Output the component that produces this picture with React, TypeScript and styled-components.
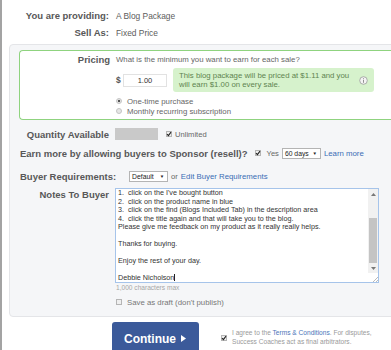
import styled, { createGlobalStyle } from "styled-components";

const GlobalStyle = createGlobalStyle`
    html, body {
        margin: 0;
        padding: 0;
        background: #ffffff;
        overflow: hidden;
    }
    body {
        font-family: "Liberation Sans", Arial, sans-serif;
    }
    #root {
        min-height: 350px;
    }
`;

const noteLines = [
    "1.  click on the I've bought button",
    "2.  click on the product name in blue",
    "3.  click on the find (Blogs Included Tab) in the description area",
    "4.  click the title again and that will take you to the blog.",
    "Please give me feedback on my product as it really really helps.",
    "",
    "Thanks for buying.",
    "",
    "Enjoy the rest of your day.",
    "",
    "Debbie Nicholson",
];

const CheckBox = ({ checked }: { checked?: boolean }) => (
    <Box>
        {checked && (
            <svg width="6" height="6" viewBox="0 0 6 6">
                <path d="M1 3.2 L2.4 4.6 L5 1.2" fill="none" stroke="#222" strokeWidth="1.1" />
            </svg>
        )}
    </Box>
);

const Radio = ({ checked }: { checked?: boolean }) => (
    <RadioDot $checked={checked} />
);

const App = () => {
    return (
        <Page>
            <GlobalStyle />
            <Summary>
                <InfoRow>
                    <Label>You are providing:</Label>
                    <Value>A Blog Package</Value>
                </InfoRow>
                <InfoRow>
                    <Label>Sell As:</Label>
                    <Value>Fixed Price</Value>
                </InfoRow>
            </Summary>

            <Panel>
                <PricingBox>
                    <PricingLabel>Pricing</PricingLabel>
                    <PricingBody>
                        <Question>What is the minimum you want to earn for each sale?</Question>
                        <PriceLine>
                            <Dollar>$</Dollar>
                            <PriceInput>1.00</PriceInput>
                            <Notice>
                                <span>
                                    This blog package will be priced at $1.11 and you
                                    <br />
                                    will earn $1.00 on every sale.
                                </span>
                                <svg width="9" height="9" viewBox="0 0 9 9">
                                    <circle cx="4.5" cy="4.5" r="3.8" fill="#f4f4f4" stroke="#9a9a9a" strokeWidth="0.8" />
                                    <rect x="4.05" y="3.8" width="0.9" height="3" fill="#888" />
                                    <rect x="4.05" y="2.2" width="0.9" height="0.9" fill="#888" />
                                </svg>
                            </Notice>
                        </PriceLine>
                        <RadioList>
                            <OptionRow>
                                <Radio checked />
                                One-time purchase
                            </OptionRow>
                            <OptionRow>
                                <Radio />
                                Monthly recurring subscription
                            </OptionRow>
                        </RadioList>
                    </PricingBody>
                </PricingBox>

                <FieldRow>
                    <Label>Quantity Available</Label>
                    <Inline>
                        <QtyBox />
                        <CheckBox checked />
                        <Small>Unlimited</Small>
                    </Inline>
                </FieldRow>

                <WideRow>
                    <Label>Earn more by allowing buyers to Sponsor (resell)?</Label>
                    <Inline $gap={6}>
                        <CheckBox checked />
                        <Small>Yes</Small>
                    </Inline>
                    <Select $width={39}>60 days</Select>
                    <Link>Learn more</Link>
                </WideRow>

                <WideRow $top={7}>
                    <Label>Buyer Requirements:</Label>
                    <Select $width={39} $left={6}>Default</Select>
                    <Small>or</Small>
                    <Link>Edit Buyer Requirements</Link>
                </WideRow>

                <NotesRow>
                    <NotesLabel>Notes To Buyer</NotesLabel>
                    <div>
                        <NoteArea>
                            <NoteText>
                                {noteLines.map((line, i) => (
                                    <NoteLine key={i}>
                                        {line}
                                        {i === noteLines.length - 1 && <Caret />}
                                    </NoteLine>
                                ))}
                            </NoteText>
                            <ScrollBar>
                                <ScrollArrow>
                                    <svg width="5" height="3" viewBox="0 0 5 3">
                                        <path d="M0 3 L2.5 0 L5 3 Z" fill="#777" />
                                    </svg>
                                </ScrollArrow>
                                <Track>
                                    <Thumb />
                                </Track>
                                <ScrollArrow>
                                    <svg width="5" height="3" viewBox="0 0 5 3">
                                        <path d="M0 0 L2.5 3 L5 0 Z" fill="#777" />
                                    </svg>
                                </ScrollArrow>
                                <Grip>
                                    <svg width="6" height="6" viewBox="0 0 6 6">
                                        <path d="M6 1 L1 6 M6 4 L4 6" stroke="#aaa" strokeWidth="0.8" />
                                    </svg>
                                </Grip>
                            </ScrollBar>
                        </NoteArea>
                        <Hint>1,000 characters max</Hint>
                        <DraftRow>
                            <CheckBox />
                            Save as draft (don't publish)
                        </DraftRow>
                    </div>
                </NotesRow>
            </Panel>

            <Footer>
                <ContinueButton>
                    Continue
                    <svg width="6" height="7" viewBox="0 0 6 7">
                        <path d="M0 0 L5 3.5 L0 7 Z" fill="#fff" />
                    </svg>
                </ContinueButton>
                <Agree>
                    <CheckBox checked />
                    <AgreeText>
                        I agree to the <FootLink>Terms &amp; Conditions</FootLink>. For disputes,
                        <br />
                        Success Coaches act as final arbitrators.
                    </AgreeText>
                </Agree>
            </Footer>
        </Page>
    );
};

const Page = styled.div`
    min-height: 350px;
    border-left: 2px solid #a3a3a3;
    color: #666;
`;

const Summary = styled.div`
    padding-top: 7px;
`;

const InfoRow = styled.div`
    display: grid;
    grid-template-columns: 107px 1fr;
    column-gap: 7px;
    height: 17px;
    align-items: center;
`;

const Label = styled.div`
    font-size: 9.5px;
    font-weight: bold;
    color: #585858;
    text-align: right;
    white-space: nowrap;
`;

const Value = styled.div`
    font-size: 8.4px;
    color: #5c5c5c;
`;

const Panel = styled.div`
    margin: 3px 0 0 7px;
    width: 440px;
    background: #f5f6f8;
    border: 1px solid #e4e5e8;
    border-radius: 4px;
    padding: 5px 0 8px 0;
`;

const PricingBox = styled.div`
    margin-left: 9px;
    background: #ffffff;
    border: 1px solid #8fd37f;
    border-right: none;
    border-radius: 4px 0 0 4px;
    padding: 3px 0;
    display: grid;
    grid-template-columns: 90px 1fr;
    column-gap: 6px;
`;

const PricingLabel = styled(Label)`
    line-height: 12px;
`;

const PricingBody = styled.div`
    display: flex;
    flex-direction: column;
`;

const Question = styled.div`
    font-size: 7.8px;
    line-height: 12px;
    color: #666;
`;

const PriceLine = styled.div`
    display: flex;
    align-items: center;
    height: 24px;
    margin-top: 2px;
`;

const Dollar = styled.div`
    width: 7px;
    font-size: 8.5px;
    font-weight: bold;
    color: #555;
`;

const PriceInput = styled.div`
    width: 42px;
    height: 11px;
    border: 1px solid #e2e2e2;
    font-size: 7.5px;
    line-height: 11px;
    text-align: center;
    color: #333;
    margin-right: 6px;
`;

const Notice = styled.div`
    width: 201px;
    height: 24px;
    box-sizing: border-box;
    background: #d6f2cc;
    border-radius: 3px;
    padding: 0 6px 0 6px;
    display: flex;
    align-items: center;
    justify-content: space-between;
    font-size: 7.8px;
    line-height: 9px;
    color: #5f8450;
`;

const RadioList = styled.div`
    margin-top: 4px;
`;

const OptionRow = styled.div`
    display: flex;
    align-items: center;
    gap: 5px;
    height: 10px;
    font-size: 7.8px;
    color: #666;
`;

const RadioDot = styled.span<{ $checked?: boolean }>`
    width: 6px;
    height: 6px;
    box-sizing: border-box;
    border-radius: 50%;
    border: 1px solid #c4c4c4;
    background: ${(p) => (p.$checked ? "radial-gradient(circle, #555 0 1.2px, #e8e8e8 1.6px)" : "#e6e6e6")};
`;

const Box = styled.span`
    width: 6px;
    height: 6px;
    box-sizing: border-box;
    border: 1px solid #b5b5b5;
    background: #efefef;
    display: inline-flex;
    align-items: center;
    justify-content: center;
    flex-shrink: 0;
    > svg {
        margin: -1px;
    }
`;

const FieldRow = styled.div`
    display: grid;
    grid-template-columns: 99px 1fr;
    column-gap: 6px;
    align-items: center;
    height: 16px;
    margin-top: 6px;
`;

const Inline = styled.div<{ $gap?: number }>`
    display: flex;
    align-items: center;
    gap: ${(p) => p.$gap ?? 3}px;
`;

const QtyBox = styled.div`
    width: 43px;
    height: 12px;
    background: #c9c9c9;
    margin-right: 5px;
`;

const Small = styled.span`
    font-size: 7.6px;
    color: #666;
`;

const WideRow = styled.div<{ $top?: number }>`
    display: flex;
    align-items: center;
    gap: 3px;
    height: 16px;
    margin-top: ${(p) => p.$top ?? 3}px;
    padding-left: 10px;
    > ${Label} {
        margin-right: 4px;
    }
`;

const Select = styled.div<{ $width: number; $left?: number }>`
    width: ${(p) => p.$width}px;
    height: 11px;
    box-sizing: border-box;
    margin-left: ${(p) => p.$left ?? 0}px;
    border: 1px solid #b4b4b4;
    background: #fff;
    font-size: 6.8px;
    line-height: 9px;
    padding-left: 2px;
    color: #222;
    position: relative;
    &::after {
        content: "▼";
        position: absolute;
        right: 3px;
        top: 0;
        font-size: 4.5px;
        line-height: 9px;
        color: #222;
    }
`;

const Link = styled.span`
    font-size: 7.8px;
    color: #3a6db5;
`;

const NotesRow = styled.div`
    display: grid;
    grid-template-columns: 99px 264px;
    column-gap: 6px;
    margin-top: 4px;
`;

const NotesLabel = styled(Label)`
    line-height: 14px;
`;

const NoteArea = styled.div`
    height: 95px;
    box-sizing: border-box;
    border: 1px solid #a6c4ea;
    background: #fff;
    display: flex;
    overflow: hidden;
`;

const NoteText = styled.div`
    flex: 1;
    padding: 0 2px;
    font-size: 7.2px;
    color: #333;
`;

const NoteLine = styled.div`
    height: 8.5px;
    line-height: 8.5px;
    white-space: pre;
`;

const Caret = styled.span`
    display: inline-block;
    width: 1px;
    height: 7px;
    background: #222;
    vertical-align: -1px;
`;

const ScrollBar = styled.div`
    width: 10px;
    background: #f1f1f1;
    display: flex;
    flex-direction: column;
`;

const ScrollArrow = styled.div`
    height: 10px;
    display: flex;
    align-items: center;
    justify-content: center;
`;

const Track = styled.div`
    flex: 1;
    display: flex;
    flex-direction: column;
    justify-content: flex-end;
`;

const Thumb = styled.div`
    height: 45px;
    background: #c4c4c4;
    margin: 0 1px;
`;

const Grip = styled.div`
    height: 9px;
    background: #fff;
    display: flex;
    align-items: flex-end;
    justify-content: flex-end;
`;

const Hint = styled.div`
    font-size: 6.6px;
    line-height: 8px;
    margin: 1px 0 0 1px;
    color: #a6a6a6;
`;

const DraftRow = styled.div`
    display: flex;
    align-items: center;
    gap: 5px;
    height: 12px;
    margin-top: 4px;
    padding-left: 1px;
    font-size: 7.8px;
    color: #777;
`;

const Footer = styled.div`
    display: flex;
    align-items: center;
    margin-top: 5px;
    padding-left: 110px;
`;

const ContinueButton = styled.div`
    width: 87px;
    height: 34px;
    background: #3b5a9a;
    border-radius: 3px 3px 0 0;
    color: #fff;
    font-size: 12px;
    font-weight: bold;
    display: flex;
    align-items: center;
    justify-content: center;
    gap: 5px;
    padding-bottom: 1px;
    box-sizing: border-box;
`;

const Agree = styled.div`
    display: flex;
    align-items: center;
    gap: 5px;
    margin-left: 22px;
    margin-top: -3px;
`;

const AgreeText = styled.div`
    font-size: 6.6px;
    line-height: 8.5px;
    color: #9a9a9a;
`;

const FootLink = styled.span`
    color: #4b75b8;
`;

export default App;
